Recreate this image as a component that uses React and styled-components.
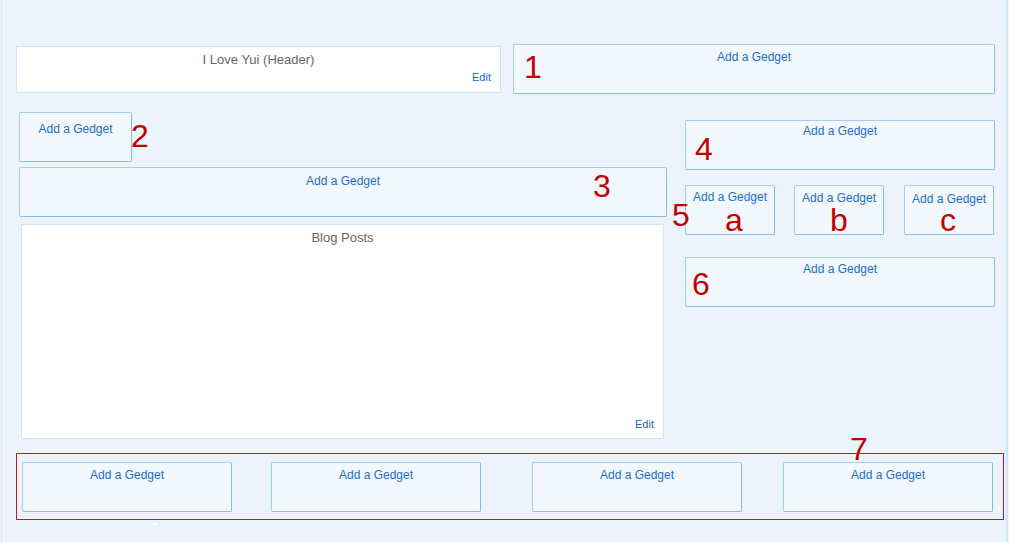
import React from "react";
import styled, { createGlobalStyle } from "styled-components";

const GlobalStyle = createGlobalStyle`
  html, body {
    margin: 0;
    padding: 0;
    background: #ecf3fd;
  }
  body {
    font-family: "Liberation Sans", Arial, sans-serif;
  }
  * { box-sizing: border-box; }
`;

const Page = styled.div`
  margin-left: 1px;
  width: 1007px;
  min-height: 542px;
  border-left: 1px solid #dde7f2;
  border-right: 2px solid #d0e5fa;
  padding: 44px 0 0 14px;
`;

const TopRow = styled.div`
  display: flex;
  align-items: flex-start;
  gap: 12px;
`;

const Panel = styled.div`
  display: flex;
  flex-direction: column;
  background: #ffffff;
  border: 1px solid #cfe4f8;
  width: ${(p) => p.$w}px;
  height: ${(p) => p.$h}px;
  margin: ${(p) => p.$m || "0"};
  padding: 5px 9px ${(p) => p.$pb}px 9px;
`;

const PanelTitle = styled.div`
  font-size: 13px;
  line-height: 15px;
  color: #666666;
  text-align: center;
`;

const EditLink = styled.a`
  margin-top: auto;
  align-self: flex-end;
  font-size: 11px;
  line-height: 13px;
  color: #1a5fc8;
  text-decoration: none;
  cursor: pointer;
`;

const Gadget = styled.div`
  position: relative;
  flex: none;
  width: ${(p) => p.$w}px;
  height: 50px;
  margin-top: ${(p) => p.$mt || 0}px;
  margin-left: ${(p) => p.$ml || 0}px;
  padding-top: ${(p) => p.$pt}px;
  background: #f3f8ff;
  border: 1px solid;
  border-color: #a6cdee #86bbe7 #86bbe7 #a6cdee;
  border-radius: 2px;
  text-align: center;
  font-size: 12px;
  line-height: 14px;
`;

const GadgetLink = styled.a`
  font-size: 12px;
  line-height: 14px;
  color: #1c6ec6;
  text-decoration: none;
  cursor: pointer;
  white-space: nowrap;
`;

const Mark = styled.span`
  position: absolute;
  left: ${(p) => p.$x}px;
  top: ${(p) => p.$y}px;
  font-family: "Liberation Sans", Arial, sans-serif;
  font-size: 32px;
  line-height: 1;
  color: #c30000;
  pointer-events: none;
`;

const Main = styled.div`
  display: flex;
  align-items: flex-start;
  gap: 18px;
  margin-top: 18px;
  padding-left: 3px;
`;

const LeftColumn = styled.div`
  display: flex;
  flex-direction: column;
  align-items: flex-start;
  width: 648px;
`;

const RightColumn = styled.div`
  display: flex;
  flex-direction: column;
  width: 310px;
  padding-top: 8px;
`;

const TrioRow = styled.div`
  position: relative;
  display: flex;
  margin-top: 15px;
`;

const Footer = styled.div`
  position: relative;
  display: flex;
  width: 988px;
  height: 67px;
  margin-top: 14px;
  padding: 8px 10px 7px 5px;
  border: 1px solid #c8141e;
`;

const Handle = styled.div`
  width: 7px;
  height: 2px;
  margin: 3px 0 0 135px;
  background: #ffffff;
`;

const AddGadget = ({ w, pt, mt, ml, children }) => (
  <Gadget $w={w} $pt={pt} $mt={mt} $ml={ml}>
    <GadgetLink>Add a Gedget</GadgetLink>
    {children}
  </Gadget>
);

export default function App() {
  return (
    <>
      <GlobalStyle />
      <Page>
        <TopRow>
          <Panel $w={485} $h={47} $m="2px 0 0 0" $pb={8}>
            <PanelTitle>I Love Yui (Header)</PanelTitle>
            <EditLink>Edit</EditLink>
          </Panel>
          <AddGadget w={482} pt={5}>
            <Mark $x={10} $y={6}>1</Mark>
          </AddGadget>
        </TopRow>

        <Main>
          <LeftColumn>
            <AddGadget w={113} pt={9}>
              <Mark $x={111} $y={7}>2</Mark>
            </AddGadget>
            <AddGadget w={648} pt={6} mt={5}>
              <Mark $x={573} $y={2}>3</Mark>
            </AddGadget>
            <Panel $w={643} $h={215} $m="7px 0 0 2px" $pb={7}>
              <PanelTitle>Blog Posts</PanelTitle>
              <EditLink>Edit</EditLink>
            </Panel>
          </LeftColumn>

          <RightColumn>
            <AddGadget w={310} pt={3}>
              <Mark $x={9} $y={12}>4</Mark>
            </AddGadget>
            <TrioRow>
              <AddGadget w={90} pt={4}>
                <Mark $x={39} $y={18}>a</Mark>
              </AddGadget>
              <AddGadget w={90} pt={5} ml={19}>
                <Mark $x={35} $y={18}>b</Mark>
              </AddGadget>
              <AddGadget w={90} pt={6} ml={20}>
                <Mark $x={35} $y={18}>c</Mark>
              </AddGadget>
              <Mark $x={-13} $y={14}>5</Mark>
            </TrioRow>
            <AddGadget w={310} pt={4} mt={22}>
              <Mark $x={6} $y={10}>6</Mark>
            </AddGadget>
          </RightColumn>
        </Main>

        <Footer>
          <AddGadget w={210} pt={5} />
          <AddGadget w={210} pt={5} ml={39} />
          <AddGadget w={210} pt={5} ml={51} />
          <AddGadget w={210} pt={5} ml={41} />
          <Mark $x={833} $y={-21}>7</Mark>
        </Footer>
        <Handle />
      </Page>
    </>
  );
}
